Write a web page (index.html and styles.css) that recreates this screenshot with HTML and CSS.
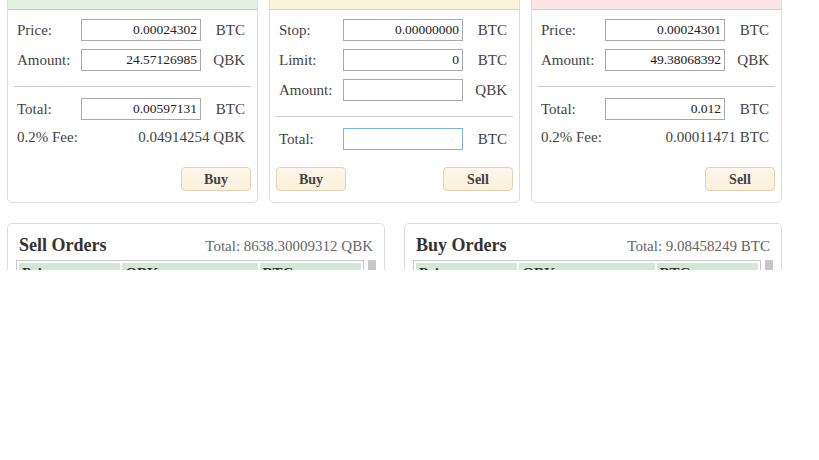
FILE: index.html
```html
<!DOCTYPE html>
<html lang="en">
<head>
    <meta charset="UTF-8">
    <title>QBK/BTC Trade</title>
    <link rel="stylesheet" href="styles.css">
</head>
<body>
    <div class="page">
        <div class="trade-row">
            <!-- Buy -->
            <div class="trade-box">
                <div class="box-head head-buy"></div>
                <div class="box-body">
                    <div class="field">
                        <span class="label">Price:</span>
                        <input class="num" type="text" value="0.00024302">
                        <span class="unit">BTC</span>
                    </div>
                    <div class="field">
                        <span class="label">Amount:</span>
                        <input class="num" type="text" value="24.57126985">
                        <span class="unit">QBK</span>
                    </div>
                    <div class="divider"></div>
                    <div class="field">
                        <span class="label">Total:</span>
                        <input class="num" type="text" value="0.00597131">
                        <span class="unit">BTC</span>
                    </div>
                    <div class="fee">
                        <span class="label">0.2% Fee:</span>
                        <span class="fee-val">0.04914254 QBK</span>
                    </div>
                    <div class="actions end">
                        <button class="btn">Buy</button>
                    </div>
                </div>
            </div>

            <!-- Stop limit -->
            <div class="trade-box">
                <div class="box-head head-stop"></div>
                <div class="box-body">
                    <div class="field">
                        <span class="label">Stop:</span>
                        <input class="num" type="text" value="0.00000000">
                        <span class="unit">BTC</span>
                    </div>
                    <div class="field">
                        <span class="label">Limit:</span>
                        <input class="num" type="text" value="0">
                        <span class="unit">BTC</span>
                    </div>
                    <div class="field">
                        <span class="label">Amount:</span>
                        <input class="num" type="text" value="">
                        <span class="unit">QBK</span>
                    </div>
                    <div class="divider"></div>
                    <div class="field">
                        <span class="label">Total:</span>
                        <input class="num focused" type="text" value="">
                        <span class="unit">BTC</span>
                    </div>
                    <div class="actions split">
                        <button class="btn">Buy</button>
                        <button class="btn">Sell</button>
                    </div>
                </div>
            </div>

            <!-- Sell -->
            <div class="trade-box">
                <div class="box-head head-sell"></div>
                <div class="box-body">
                    <div class="field">
                        <span class="label">Price:</span>
                        <input class="num" type="text" value="0.00024301">
                        <span class="unit">BTC</span>
                    </div>
                    <div class="field">
                        <span class="label">Amount:</span>
                        <input class="num" type="text" value="49.38068392">
                        <span class="unit">QBK</span>
                    </div>
                    <div class="divider"></div>
                    <div class="field">
                        <span class="label">Total:</span>
                        <input class="num" type="text" value="0.012">
                        <span class="unit">BTC</span>
                    </div>
                    <div class="fee">
                        <span class="label">0.2% Fee:</span>
                        <span class="fee-val">0.00011471 BTC</span>
                    </div>
                    <div class="actions end">
                        <button class="btn">Sell</button>
                    </div>
                </div>
            </div>
        </div>

        <div class="orders-row">
            <div class="orders">
                <div class="orders-head">
                    <h2>Sell Orders</h2>
                    <span class="orders-total">Total: 8638.30009312 QBK</span>
                </div>
                <div class="orders-scroll">
                    <div class="table-wrap">
                        <table>
                            <tr><th>Price</th><th>QBK</th><th>BTC</th></tr>
                        </table>
                    </div>
                    <div class="scrollbar"></div>
                </div>
            </div>
            <div class="orders">
                <div class="orders-head">
                    <h2>Buy Orders</h2>
                    <span class="orders-total">Total: 9.08458249 BTC</span>
                </div>
                <div class="orders-scroll">
                    <div class="table-wrap">
                        <table>
                            <tr><th>Price</th><th>QBK</th><th>BTC</th></tr>
                        </table>
                    </div>
                    <div class="scrollbar"></div>
                </div>
            </div>
        </div>
    </div>
</body>
</html>
```

FILE: styles.css
```css
* {
    margin: 0;
    padding: 0;
    box-sizing: border-box;
}

body {
    font-family: 'Liberation Serif', 'Times New Roman', serif;
    font-size: 15px;
    color: #444;
    background: #fff;
}

.page {
    height: 270px;
    overflow: hidden;
    padding-left: 7px;
    width: 782px;
}

/* trade boxes */
.trade-row {
    display: flex;
    gap: 11px;
    margin-top: -21px;
}

.trade-box {
    flex: 1;
    border: 1px solid #ddd;
    border-radius: 5px;
    display: flex;
    flex-direction: column;
    height: 224px;
}

.box-head {
    height: 30px;
    border-radius: 4px 4px 0 0;
    border-bottom: 1px solid;
}

.head-buy {
    background: #e4f0e3;
    border-bottom-color: #b7d3b2;
}

.head-stop {
    background: #fbf4dc;
    border-bottom-color: #e5d38e;
}

.head-sell {
    background: #fbe5e6;
    border-bottom-color: #e7c3c6;
}

.box-body {
    flex: 1;
    display: flex;
    flex-direction: column;
    padding: 9px 6px 11px;
}

.field {
    display: flex;
    align-items: center;
    height: 22px;
    margin-bottom: 8px;
}

.label {
    width: 67px;
    padding-left: 3px;
    flex-shrink: 0;
}

.num {
    width: 120px;
    height: 22px;
    border: 1px solid #a9a9a9;
    background: #fff;
    font-family: 'Liberation Serif', 'Times New Roman', serif;
    font-size: 13.5px;
    color: #222;
    text-align: right;
    padding: 0 3px;
    outline: none;
}

.num.focused {
    border-color: #7eb3e9;
}

.unit {
    flex: 1;
    text-align: right;
    padding-right: 6px;
}

.divider {
    height: 1px;
    background: #ccc;
    margin: 7px 0 11px;
}

.fee {
    display: flex;
    justify-content: space-between;
    align-items: center;
    height: 18px;
    padding-right: 6px;
}

.fee .label {
    width: auto;
}

.actions {
    margin-top: auto;
    display: flex;
}

.actions.end {
    justify-content: flex-end;
}

.actions.split {
    justify-content: space-between;
}

.btn {
    width: 70px;
    height: 24px;
    padding-top: 2px;
    background: linear-gradient(#fdf6ea, #fcf0dc);
    border: 1px solid #e6d2ad;
    border-radius: 4px;
    font-family: 'Liberation Serif', 'Times New Roman', serif;
    font-size: 14px;
    font-weight: 700;
    color: #444;
    cursor: pointer;
}

/* order books */
.orders-row {
    display: flex;
    gap: 19px;
    margin-top: 20px;
    width: 775px;
}

.orders {
    flex: 1;
    border: 1px solid #ddd;
    border-radius: 5px;
    padding: 10px 8px 0;
    height: 120px;
}

.orders-head {
    display: flex;
    justify-content: space-between;
    align-items: baseline;
    padding: 0 3px;
    margin-bottom: 4px;
}

.orders-head h2 {
    font-size: 18px;
    font-weight: 700;
    color: #333;
    line-height: 22px;
}

.orders-total {
    font-size: 15px;
    color: #666;
}

.orders-scroll {
    display: flex;
    gap: 4px;
}

.table-wrap {
    flex: 1;
    border: 1px solid #c9c9c9;
    height: 80px;
}

table {
    width: 100%;
    border-spacing: 2px;
}

th {
    background: #d3e7d5;
    text-align: left;
    font-size: 15px;
    font-weight: 700;
    color: #333;
    padding: 2px 3px 1px;
}

th:nth-child(1),
th:nth-child(3) {
    width: 30%;
}

.scrollbar {
    width: 8px;
    height: 80px;
    background: #c6c6c6;
}
```
